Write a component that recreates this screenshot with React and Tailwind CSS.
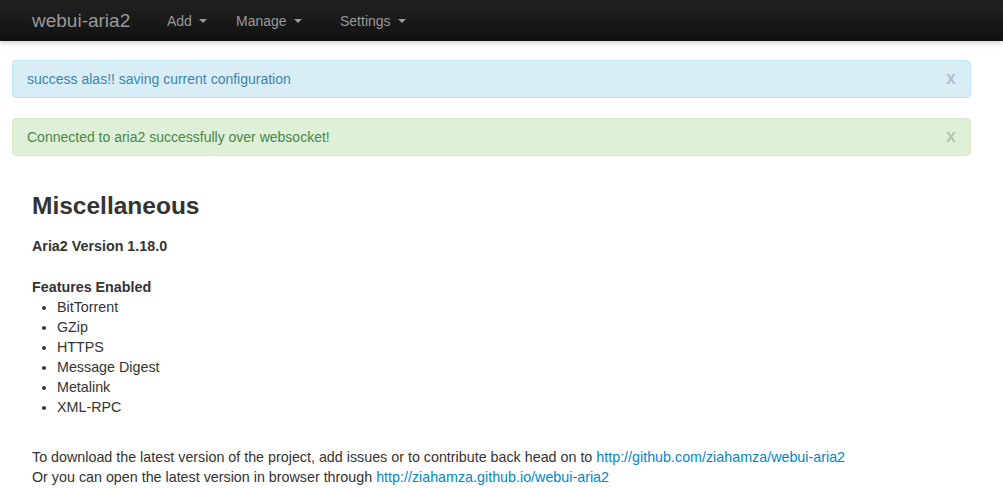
import React from 'react';

const font = { fontFamily: '"Liberation Sans", Arial, sans-serif' };

function NavItem({ label, width }) {
  return (
    <div className={`flex items-center gap-[7px] text-[14px] text-[#999] ${width}`}>
      <span>{label}</span>
      <span className="inline-block w-0 h-0 border-l-[4px] border-r-[4px] border-t-[4px] border-l-transparent border-r-transparent border-t-[#999] mt-[1px]" />
    </div>
  );
}

function Alert({ tone, children }) {
  const cls =
    tone === 'info'
      ? 'bg-[#d9edf7] border-[#bce8f1] text-[#3a87ad]'
      : 'bg-[#dff0d8] border-[#d6e9c6] text-[#468847]';
  return (
    <div className={`flex items-center justify-between border rounded-[4px] h-[38px] pl-[14px] pr-[14px] mb-[20px] text-[14px] ${cls}`}>
      <span>{children}</span>
      <span className="text-[18px] font-bold text-black/20 leading-none pb-[2px]">x</span>
    </div>
  );
}

export default function App() {
  const features = ['BitTorrent', 'GZip', 'HTTPS', 'Message Digest', 'Metalink', 'XML-RPC'];
  return (
    <div className="min-h-[488px] bg-white text-[#333] leading-[20px]" style={font}>
      <div className="h-[41px] bg-gradient-to-b from-[#222] to-[#111] shadow-[0_1px_6px_rgba(0,0,0,0.25)] flex items-center pl-[32px]">
        <span className="text-[19px] text-[#999] w-[135px]">webui-aria2</span>
        <NavItem label="Add" width="w-[69px]" />
        <NavItem label="Manage" width="w-[104px]" />
        <NavItem label="Settings" width="w-[80px]" />
      </div>

      <div className="ml-[12px] w-[959px] pt-[19px]">
        <Alert tone="info">success alas!! saving current configuration</Alert>
        <Alert tone="success">Connected to aria2 successfully over websocket!</Alert>

        <div className="px-[20px] pt-[10px] text-[14.3px]">
          <h3 className="text-[24.5px] font-bold leading-[40px] mb-[10px] text-[#333]">Miscellaneous</h3>
          <p className="font-bold">Aria2 Version 1.18.0</p>
          <p className="font-bold mt-[21px]">Features Enabled</p>
          <ul className="ml-[25px]">
            {features.map(f => (
              <li key={f} className="list-disc">{f}</li>
            ))}
          </ul>
          <div className="mt-[30px]">
            <p>
              To download the latest version of the project, add issues or to contribute back head on to{' '}
              <a className="text-[#0088cc]" href="#">http://github.com/ziahamza/webui-aria2</a>
            </p>
            <p>
              Or you can open the latest version in browser through{' '}
              <a className="text-[#0088cc]" href="#">http://ziahamza.github.io/webui-aria2</a>
            </p>
          </div>
        </div>
      </div>
    </div>
  );
}
